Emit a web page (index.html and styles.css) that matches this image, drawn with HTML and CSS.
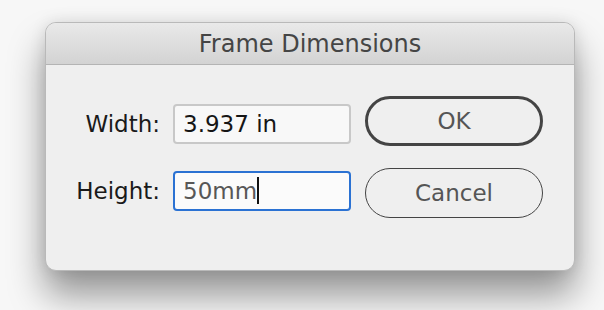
FILE: index.html
```html
<!DOCTYPE html>
<html>
<head>
<meta charset="utf-8">
<link rel="stylesheet" href="styles.css">
</head>
<body>
<div class="dialog">
  <div class="titlebar">Frame Dimensions</div>
  <div class="content">
    <div class="fields">
      <label class="label">Width:</label>
      <div class="input">3.937 in</div>
      <label class="label">Height:</label>
      <div class="input focused"><span class="typed">50mm</span><span class="caret"></span></div>
    </div>
    <div class="buttons">
      <div class="btn default">OK</div>
      <div class="btn">Cancel</div>
    </div>
  </div>
</div>
</body>
</html>
```
FILE: styles.css
```css
html, body {
  margin: 0;
  height: 100%;
}
body {
  background: #f7f7f7;
  padding: 22px 0 0 45px;
  box-sizing: border-box;
  font-family: "DejaVu Sans", "Open Sans", sans-serif;
  overflow: hidden;
}
.dialog {
  width: 530px;
  height: 249px;
  box-sizing: border-box;
  background: #efefef;
  border: 1px solid #b9b9b9;
  border-radius: 11px;
  box-shadow: 0 24px 36px rgba(0,0,0,0.40), 0 0 16px rgba(0,0,0,0.10);
  overflow: hidden;
}
.titlebar {
  height: 42px;
  box-sizing: border-box;
  background: linear-gradient(#e9e9e9, #d3d3d3);
  border-bottom: 1px solid #b4b4b4;
  text-align: center;
  font-size: 24px;
  line-height: 43px;
  color: #454545;
}
.content {
  display: flex;
  padding: 31px 0 0 0;
}
.fields {
  display: grid;
  grid-template-columns: 114px 178px;
  column-gap: 13px;
  row-gap: 12px;
  align-items: center;
}
.label {
  text-align: right;
  font-size: 23px;
  color: #1a1a1a;
  white-space: nowrap;
}
.input {
  height: 40px;
  box-sizing: border-box;
  background: #f8f8f8;
  border: 2px solid #c8c8c8;
  border-radius: 4px;
  font-size: 23px;
  line-height: 36px;
  padding-left: 8px;
  color: #151515;
  display: flex;
  align-items: center;
}
.input.focused {
  background: #fbfbfb;
  border-color: #2b72d3;
  color: #575757;
}
.caret {
  display: inline-block;
  width: 2px;
  height: 27px;
  background: #111;
}
.buttons {
  display: flex;
  flex-direction: column;
  gap: 22px;
  margin-left: 14px;
}
.btn {
  width: 178px;
  height: 50px;
  box-sizing: border-box;
  border: 1.5px solid #444;
  border-radius: 25px;
  display: flex;
  align-items: center;
  justify-content: center;
  font-size: 23px;
  color: #555;
}
.btn.default {
  border: 3.5px solid #444;
}
```
